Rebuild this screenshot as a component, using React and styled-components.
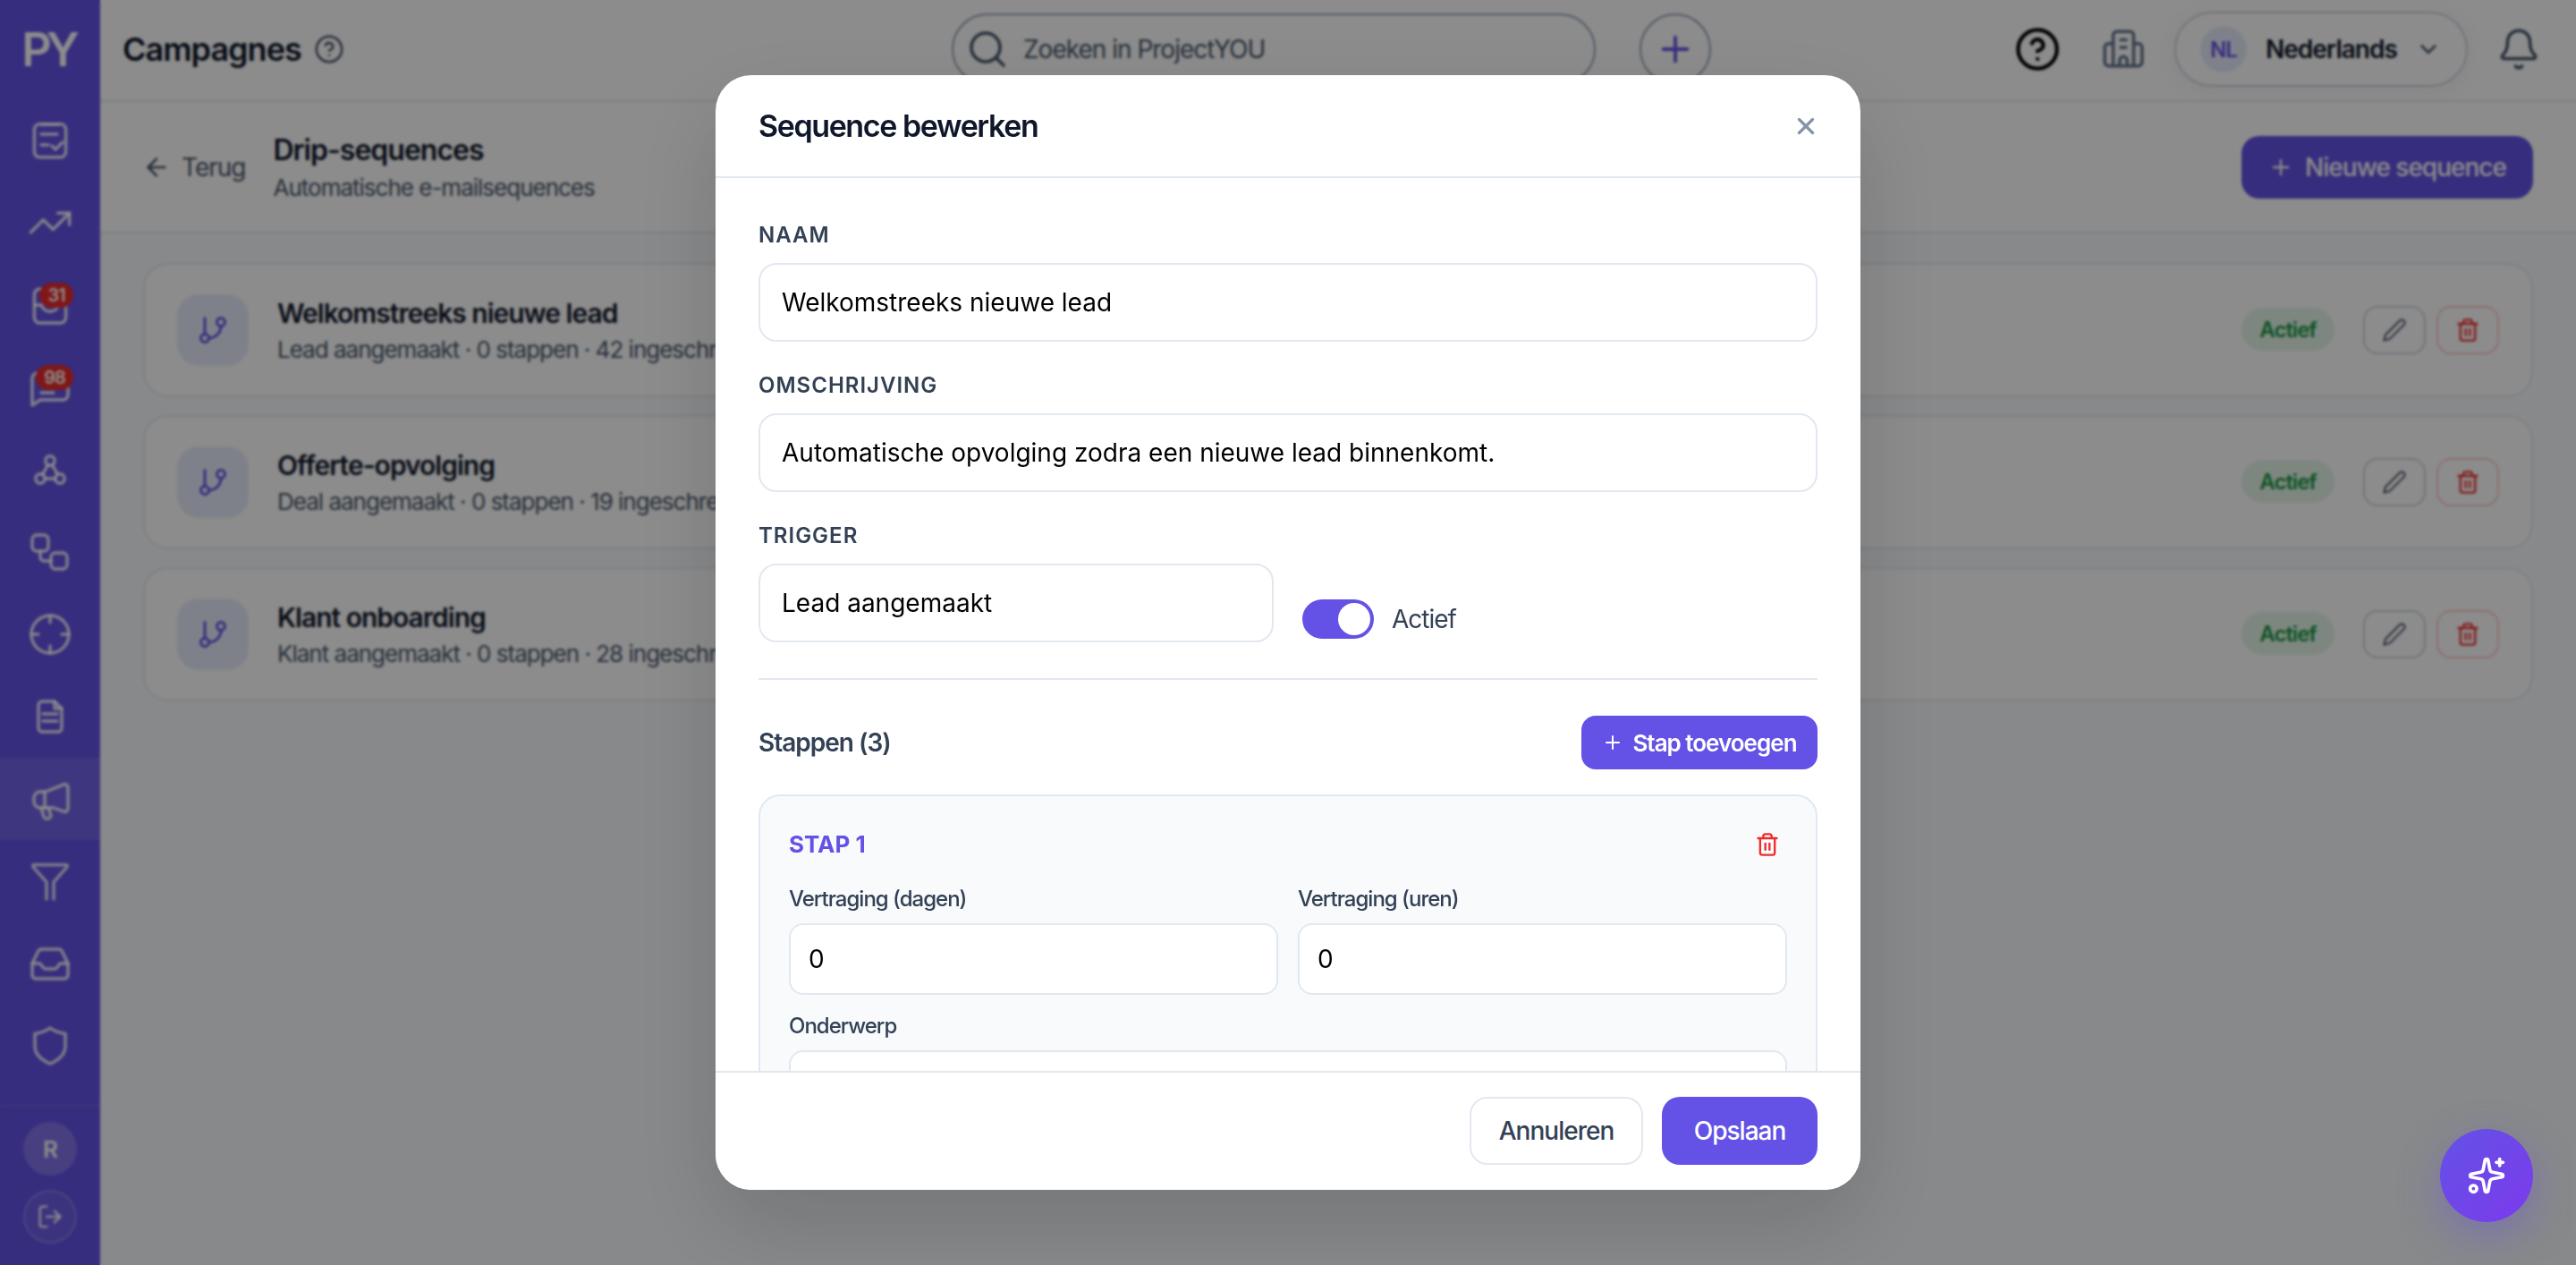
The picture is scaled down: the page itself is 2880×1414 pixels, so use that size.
import React from "react";
import styled, { createGlobalStyle } from "styled-components";
import {
  ArrowLeft, Plus, Trash2, X, ChevronDown, Search, Sparkles, Bell, CircleHelp,
  GitBranch, LogOut, TrendingUp,
} from "lucide-react";

const GlobalStyle = createGlobalStyle`
  html, body { margin: 0; height: 100%; overflow: hidden; }
  body { font-family: Inter, "Liberation Sans", sans-serif; background: #f8fafc; color: #0f172a; letter-spacing: -1px; }
  #root { height: 100%; }
  * { box-sizing: border-box; }
`;

const Shell = styled.div`display: flex; height: 100vh; background: #f8fafc;`;
const Sidebar = styled.aside`
  width: 112px; flex: none; background: #6352e5; display: flex; flex-direction: column; color: #fff;
`;
const Logo = styled.div`
  height: 111px; display: flex; align-items: center; justify-content: center;
  font-size: 52px; font-weight: 600; letter-spacing: -6px; color: #fff; line-height: 1;
  padding-right: 5px;
`;
const Nav = styled.nav`flex: 1; display: flex; flex-direction: column;`;
const NavItem = styled.div`
  position: relative; height: 92px; flex: none; display: flex; align-items: center; justify-content: center;
  background: ${(p) => (p.$active ? "rgba(255,255,255,.1)" : "transparent")};
  color: rgba(255,255,255,.88);
`;
const Count = styled.span`
  position: absolute; right: 30px; top: 21px; height: 28px; min-width: ${(p) => p.$w}px;
  border-radius: 14px; background: #e92a2a; color: #fff; font-size: 20px; font-weight: 600;
  display: flex; align-items: center; justify-content: center; line-height: 1;
`;
const SideFoot = styled.div`
  border-top: 2px solid rgba(255,255,255,.1); padding: 17px 0 24px; display: flex; flex-direction: column;
  align-items: center; gap: 16px;
`;
const Avatar = styled.div`
  width: 60px; height: 60px; border-radius: 50%; background: rgba(255,255,255,.2); display: flex;
  align-items: center; justify-content: center; font-size: 26px; font-weight: 600; color: #fff;
`;
const LogoutBtn = styled.div`
  width: 60px; height: 60px; border-radius: 50%; background: rgba(255,255,255,.07);
  border: 2px solid rgba(255,255,255,.2); display: flex; align-items: center; justify-content: center;
  color: rgba(255,255,255,.9);
`;
const Main = styled.main`flex: 1; min-width: 0; display: flex; flex-direction: column;`;
const TopBar = styled.header`
  height: 114px; flex: none; background: #fff; border-bottom: 2px solid #e2e8f0; display: flex;
  align-items: center; padding: 0 39px 2px 25px;
`;
const TitleGroup = styled.div`width: 927px; flex: none; display: flex; align-items: center;`;
const PageTitle = styled.h1`margin: 0; font-size: 36px; font-weight: 600; color: #0f172a; line-height: 1;`;
const HelpSmall = styled.span`display: flex; margin-left: 14px; color: #475569;`;
const SearchBox = styled.div`
  width: 720px; height: 80px; border-radius: 40px; border: 2px solid #94a3b8; flex: none;
  display: flex; align-items: center; gap: 16px; padding-left: 14px; color: #475569; font-size: 28px;
`;
const AddRound = styled.div`
  margin-left: 49px; width: 80px; height: 80px; border-radius: 50%; border: 2px solid #94a3b8; flex: none;
  color: #6352e5; display: flex; align-items: center; justify-content: center;
`;
const TopRight = styled.div`margin-left: auto; display: flex; align-items: center;`;
const HelpBig = styled.span`display: flex; color: #000; margin-right: 45px;`;
const Building = styled.span`display: flex; color: #64748b; margin-right: 32px;`;
const LangPill = styled.div`
  width: 328px; height: 84px; border-radius: 42px; border: 2px solid #cbd5e1; display: flex; align-items: center;
  padding-left: 27px; margin-right: 32px; box-shadow: 0 4px 24px rgba(15,23,42,.06);
`;
const LangCode = styled.span`
  width: 52px; height: 52px; border-radius: 50%; background: #e8ecfb; color: #6352e5; font-size: 24px; font-weight: 600;
  display: flex; align-items: center; justify-content: center;
`;
const LangName = styled.span`margin: 0 20px 0 21px; font-size: 28px; font-weight: 600; color: #0f172a;`;
const Chevron = styled.span`display: flex; color: #475569;`;
const BellWrap = styled.span`display: flex; color: #475569;`;
const SubHeader = styled.div`
  height: 147px; flex: none; background: #fff; border-bottom: 2px solid #e2e8f0; display: flex; align-items: center;
  padding: 0 48px 0 47px;
`;
const Back = styled.div`display: flex; align-items: center; gap: 12px; font-size: 28px; color: #475569;`;
const Heads = styled.div`margin-left: 31px; display: flex; flex-direction: column; gap: 6px;`;
const Heading = styled.div`font-size: 32px; font-weight: 600; color: #0f172a; line-height: 40px;`;
const SubHeading = styled.div`font-size: 26px; color: #475569; line-height: 32px;`;
const NewBtn = styled.div`
  margin-left: auto; width: 326px; height: 70px; border-radius: 20px; background: #6352e5; color: #fff;
  font-size: 28px; font-weight: 500; display: flex; align-items: center; justify-content: center; gap: 13px;
`;
const List = styled.div`padding: 33px 48px 0; display: flex; flex-direction: column; gap: 20px;`;
const Card = styled.div`
  height: 150px; background: #fff; border: 2px solid #e2e8f0; border-radius: 28px; display: flex; align-items: center;
  padding: 0 36px;
`;
const CardIcon = styled.div`
  width: 80px; height: 80px; border-radius: 24px; background: #e8ecfb; color: #6352e5; display: flex;
  align-items: center; justify-content: center; flex: none;
`;
const CardText = styled.div`margin-left: 32px; display: flex; flex-direction: column; gap: 6px; `;
const CardTitle = styled.div`font-size: 30px; font-weight: 600; color: #0f172a; line-height: 38px;`;
const CardSub = styled.div`font-size: 26px; color: #475569; line-height: 32px;`;
const Status = styled.span`
  margin-left: auto; width: 104px; height: 48px; border-radius: 24px; background: #e6f5ea; color: #15983f; font-size: 24px;
  font-weight: 600; display: flex; align-items: center; justify-content: center; margin-top: -2px;
`;
const IconBtn = styled.div`
  width: 70px; height: 54px; border-radius: 16px; border: 2px solid ${(p) => (p.$danger ? "#fecaca" : "#cbd5e1")};
  color: ${(p) => (p.$danger ? "#ef2b2b" : "#475569")}; display: flex; align-items: center; justify-content: center;
  margin-left: ${(p) => (p.$danger ? "12px" : "32px")};
`;
const Overlay = styled.div`
  position: fixed; inset: 0; background: rgba(0,0,0,.45); backdrop-filter: blur(1.5px); display: flex;
  align-items: center; justify-content: center; z-index: 10;
`;
const Modal = styled.div`
  width: 1280px; height: calc(100vh - 168px); background: #fff; border-radius: 40px; overflow: hidden; display: flex;
  flex-direction: column; box-shadow: 0 40px 100px rgba(0,0,0,.15);
`;
const ModalHead = styled.div`
  height: 115px; flex: none; border-bottom: 2px solid #e2e8f0; display: flex; align-items: center;
  justify-content: space-between; padding: 0 46px 0 48px;
`;
const ModalTitle = styled.h2`margin: 0; font-size: 34px; font-weight: 600; letter-spacing: -1.4px; color: #0f172a;`;
const Close = styled.span`display: flex; color: #8494a8;`;
const ModalBody = styled.div`flex: 1; min-height: 0; overflow: hidden; padding: 47px 48px 0;`;
const Field = styled.div`margin-bottom: 32px;`;
const Label = styled.div`
  font-size: 24px; font-weight: 600; letter-spacing: 1px; color: #334155; line-height: 34px; margin-bottom: 14px;
  text-transform: uppercase;
`;
const InputBox = styled.div`
  height: 88px; border: 2px solid #e2e8f0; border-radius: 20px; background: #fff; display: flex; align-items: center;
  padding: 0 24px; font-size: 28px; color: #000; letter-spacing: 0;
`;
const TriggerRow = styled.div`display: flex; gap: 32px;`;
const TriggerField = styled.div`width: 576px;`;
const ToggleRow = styled.div`display: flex; align-items: center; gap: 20px; align-self: flex-end; margin-bottom: 4px;`;
const Toggle = styled.div`
  width: 80px; height: 44px; border-radius: 22px; background: #6352e5; display: flex; align-items: center;
  justify-content: flex-end; padding: 0 4px;
`;
const Thumb = styled.span`width: 36px; height: 36px; border-radius: 50%; background: #fff;`;
const ToggleLabel = styled.span`font-size: 28px; color: #334155;`;
const Divider = styled.div`height: 2px; background: #e2e8f0; margin: 40px 0;`;
const StepsHead = styled.div`display: flex; align-items: center; justify-content: space-between; margin-bottom: 28px;`;
const StepsTitle = styled.div`font-size: 28px; font-weight: 600; color: #334155;`;
const AddStep = styled.div`
  width: 264px; height: 60px; border-radius: 16px; background: #6352e5; color: #fff; font-size: 26px; font-weight: 600;
  display: flex; align-items: center; justify-content: center; gap: 10px;
`;
const Step = styled.div`
  background: #f8fafc; border: 2px solid #e2e8f0; border-radius: 24px; padding: 32px;
`;
const StepHead = styled.div`display: flex; align-items: center; justify-content: space-between; height: 42px; margin-bottom: 26px;`;
const StepName = styled.div`font-size: 26px; font-weight: 700; letter-spacing: 0; color: #6352e5;`;
const StepTrash = styled.span`display: flex; color: #ef2b2b; margin: 2px 8px 0 0;`;
const StepGrid = styled.div`display: grid; grid-template-columns: 1fr 1fr; gap: 20px 22px;`;
const StepField = styled.div`grid-column: ${(p) => (p.$wide ? "1 / -1" : "auto")};`;
const StepLabel = styled.div`font-size: 24px; font-weight: 500; color: #334155; line-height: 30px; margin-bottom: 12px;`;
const StepInput = styled.div`
  height: 80px; border: 2px solid #e2e8f0; border-radius: 16px; background: #fff; display: flex; align-items: center;
  padding: 0 20px; font-size: 28px; color: #000; letter-spacing: 0;
`;
const ModalFoot = styled.div`
  height: 133px; flex: none; background: #fff; border-top: 2px solid #e2e8f0; display: flex; justify-content: flex-end;
  align-items: center; gap: 21px; padding: 0 48px 1px;
`;
const Cancel = styled.div`
  width: 194px; height: 76px; border-radius: 20px; border: 2px solid #e2e8f0; color: #334155; font-size: 28px;
  font-weight: 500; display: flex; align-items: center; justify-content: center;
`;
const Save = styled.div`
  width: 174px; height: 76px; border-radius: 20px; background: #6352e5; color: #fff; font-size: 28px; font-weight: 500;
  display: flex; align-items: center; justify-content: center;
`;
const Fab = styled.div`
  position: fixed; right: 48px; bottom: 48px; width: 104px; height: 104px; border-radius: 50%; z-index: 20;
  background: linear-gradient(135deg, #6352e5, #7c3aed); color: #fff; display: flex; align-items: center;
  justify-content: center; box-shadow: 0 16px 48px rgba(99,82,229,.4);
`;

const Ico = ({ size = 48, sw = 1.7, children }) => (
  <svg width={size} height={size} viewBox="0 0 24 24" fill="none" stroke="currentColor" strokeWidth={sw}
    strokeLinecap="round" strokeLinejoin="round">{children}</svg>
);
const navIcons = [
  <Ico key="a"><rect x="3.2" y="2.8" width="17.6" height="18.6" rx="3" /><path d="M7 3h10M7 8.5h9M7 14.5h4M13 15l2 2 4-4" /></Ico>,
  <TrendingUp key="b" size={52} strokeWidth={1.6} />,
  <Ico key="c"><rect x="3.2" y="3" width="17.6" height="19" rx="3" /><path d="M3.2 12h4a5 5 0 0 0 9.6 0h4" /></Ico>,
  <Ico key="d"><path d="M5 4a3 3 0 0 0-3 3v15l4.5-3H19a3 3 0 0 0 3-3V7a3 3 0 0 0-3-3z" /><path d="M7 15h7" /></Ico>,
  <Ico key="e"><circle cx="12" cy="7" r="2.6" /><circle cx="6.5" cy="17" r="2.6" /><circle cx="17.5" cy="17" r="2.6" /><path d="M10.8 9.3 7.8 14.7M13.2 9.3l3 5.4M9.1 17h5.8" /></Ico>,
  <Ico key="f"><rect x="2" y="2.5" width="9" height="9" rx="2.5" /><rect x="12.5" y="12.5" width="9" height="9" rx="2.5" /><path d="M6.5 11.5V15a2 2 0 0 0 2 2h4" /></Ico>,
  <Ico key="g"><circle cx="12" cy="12" r="10.5" /><path d="M12 1.5v4M12 18.5v4M1.5 12h4M18.5 12h4" /></Ico>,
  <Ico key="h"><path d="M7.5 3.5h7l4 4v11a2 2 0 0 1-2 2h-9a2 2 0 0 1-2-2v-13a2 2 0 0 1 2-2z" /><path d="M14.5 3.5v4h4M8 10.5h8M8 14.5h8" /></Ico>,
  <Ico key="i"><path d="M9.5 8 19.6 3.9a1.8 1.8 0 0 1 2.4 1.7v11.8a1.8 1.8 0 0 1-2.4 1.7L14 17H6.5a3.5 3.5 0 0 1-3.5-3.2v-2.6A3.5 3.5 0 0 1 6.5 8z" /><path d="M9 8v9M7 17l1.5 5c.6 1.7 4.3 1.2 3.9-.8L11 17" /></Ico>,
  <Ico key="j"><path d="M14 22v-9.5L21.5 4V2.8h-19V4L10 12.5V22" /></Ico>,
  <Ico key="k"><path d="M2 12l3.3-6.8A2.2 2.2 0 0 1 7.3 4h9.4a2.2 2.2 0 0 1 2 1.2L22 12v6.5a2 2 0 0 1-2 2H4a2 2 0 0 1-2-2z" /><path d="M2 12h4.5l1.6 2.2a2 2 0 0 0 1.6.8h4.6a2 2 0 0 0 1.6-.8l1.6-2.2H22" /></Ico>,
  <Ico key="l"><path d="M12 2c2.2 1.7 5 2.7 8.5 3.2V12c0 5-3.8 8-8.5 10-4.7-2-8.5-5-8.5-10V5.2C7 4.7 9.8 3.7 12 2z" /></Ico>,
];
const BuildingIcon = () => (
  <Ico size={50} sw={1.7}>
    <path d="M6.5 21V4.5a2 2 0 0 1 2-2h7a2 2 0 0 1 2 2V21" />
    <path d="M6.5 9H4a2 2 0 0 0-2 2v8a2 2 0 0 0 2 2h16a2 2 0 0 0 2-2v-8a2 2 0 0 0-2-2h-2.5" />
    <path d="M10.5 7h3M10.5 11h3M10 21v-3a2 2 0 0 1 4 0v3" />
  </Ico>
);
const PencilIcon = () => (
  <Ico size={28} sw={1.7}><path d="M17 3a2.83 2.83 0 1 1 4 4L7.5 20.5 2 22l1.5-5.5z" /></Ico>
);

const rows = [
  ["Welkomstreeks nieuwe lead", "Lead aangemaakt · 0 stappen · 42 ingeschreven"],
  ["Offerte-opvolging", "Deal aangemaakt · 0 stappen · 19 ingeschreven"],
  ["Klant onboarding", "Klant aangemaakt · 0 stappen · 28 ingeschreven"],
];

export default function App() {
  return (
    <>
      <GlobalStyle />
      <Shell>
        <Sidebar>
          <Logo>PY</Logo>
          <Nav>
            {navIcons.map((icon, i) => (
              <NavItem key={i} $active={i === 8}>
                {icon}
                {i === 2 && <Count $w={38}>31</Count>}
                {i === 3 && <Count $w={42}>98</Count>}
              </NavItem>
            ))}
          </Nav>
          <SideFoot>
            <Avatar>R</Avatar>
            <LogoutBtn><LogOut size={30} strokeWidth={2} /></LogoutBtn>
          </SideFoot>
        </Sidebar>
        <Main>
          <TopBar>
            <TitleGroup>
              <PageTitle>Campagnes</PageTitle>
              <HelpSmall><CircleHelp size={34} strokeWidth={1.8} /></HelpSmall>
            </TitleGroup>
            <SearchBox><Search size={48} strokeWidth={1.8} />Zoeken in ProjectYOU</SearchBox>
            <AddRound><Plus size={46} strokeWidth={2} /></AddRound>
            <TopRight>
              <HelpBig><CircleHelp size={52} strokeWidth={2} /></HelpBig>
              <Building><BuildingIcon /></Building>
              <LangPill>
                <LangCode>NL</LangCode>
                <LangName>Nederlands</LangName>
                <Chevron><ChevronDown size={30} strokeWidth={2} /></Chevron>
              </LangPill>
              <BellWrap><Bell size={50} strokeWidth={1.7} /></BellWrap>
            </TopRight>
          </TopBar>
          <SubHeader>
            <Back><ArrowLeft size={32} strokeWidth={2} />Terug</Back>
            <Heads>
              <Heading>Drip-sequences</Heading>
              <SubHeading>Automatische e-mailsequences</SubHeading>
            </Heads>
            <NewBtn><Plus size={28} strokeWidth={2} />Nieuwe sequence</NewBtn>
          </SubHeader>
          <List>
            {rows.map(([t, s]) => (
              <Card key={t}>
                <CardIcon><GitBranch size={36} strokeWidth={2} /></CardIcon>
                <CardText>
                  <CardTitle>{t}</CardTitle>
                  <CardSub>{s}</CardSub>
                </CardText>
                <Status>Actief</Status>
                <IconBtn><PencilIcon /></IconBtn>
                <IconBtn $danger><Trash2 size={28} strokeWidth={2} /></IconBtn>
              </Card>
            ))}
          </List>
        </Main>
      </Shell>
      <Overlay>
        <Modal>
          <ModalHead>
            <ModalTitle>Sequence bewerken</ModalTitle>
            <Close><X size={30} strokeWidth={2.6} /></Close>
          </ModalHead>
          <ModalBody>
            <Field>
              <Label>Naam</Label>
              <InputBox>Welkomstreeks nieuwe lead</InputBox>
            </Field>
            <Field>
              <Label>Omschrijving</Label>
              <InputBox>Automatische opvolging zodra een nieuwe lead binnenkomt.</InputBox>
            </Field>
            <TriggerRow>
              <TriggerField>
                <Label>Trigger</Label>
                <InputBox>Lead aangemaakt</InputBox>
              </TriggerField>
              <ToggleRow>
                <Toggle><Thumb /></Toggle>
                <ToggleLabel>Actief</ToggleLabel>
              </ToggleRow>
            </TriggerRow>
            <Divider />
            <StepsHead>
              <StepsTitle>Stappen (3)</StepsTitle>
              <AddStep><Plus size={24} strokeWidth={2} />Stap toevoegen</AddStep>
            </StepsHead>
            <Step>
              <StepHead>
                <StepName>STAP 1</StepName>
                <StepTrash><Trash2 size={28} strokeWidth={2} /></StepTrash>
              </StepHead>
              <StepGrid>
                <StepField>
                  <StepLabel>Vertraging (dagen)</StepLabel>
                  <StepInput>0</StepInput>
                </StepField>
                <StepField>
                  <StepLabel>Vertraging (uren)</StepLabel>
                  <StepInput>0</StepInput>
                </StepField>
                <StepField $wide>
                  <StepLabel>Onderwerp</StepLabel>
                  <StepInput />
                </StepField>
              </StepGrid>
            </Step>
          </ModalBody>
          <ModalFoot>
            <Cancel>Annuleren</Cancel>
            <Save>Opslaan</Save>
          </ModalFoot>
        </Modal>
      </Overlay>
      <Fab><Sparkles size={44} strokeWidth={2} /></Fab>
    </>
  );
}
